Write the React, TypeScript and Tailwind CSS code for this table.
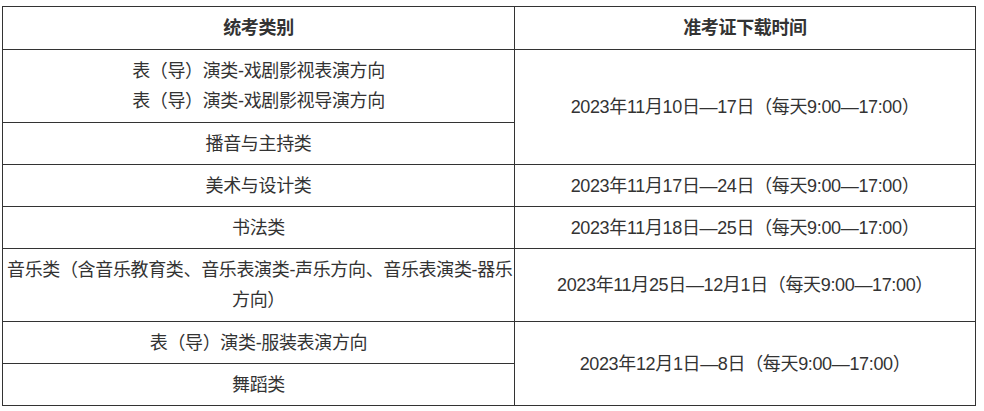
const rows: { cats: string[][]; time: string }[] = [
  {
    cats: [["表（导）演类-戏剧影视表演方向", "表（导）演类-戏剧影视导演方向"], ["播音与主持类"]],
    time: "2023年11月10日—17日（每天9:00—17:00）",
  },
  { cats: [["美术与设计类"]], time: "2023年11月17日—24日（每天9:00—17:00）" },
  { cats: [["书法类"]], time: "2023年11月18日—25日（每天9:00—17:00）" },
  {
    cats: [["音乐类（含音乐教育类、音乐表演类-声乐方向、音乐表演类-器乐", "方向）"]],
    time: "2023年11月25日—12月1日（每天9:00—17:00）",
  },
  { cats: [["表（导）演类-服装表演方向"], ["舞蹈类"]], time: "2023年12月1日—8日（每天9:00—17:00）" },
];

const cell = "border border-[#333] px-[4px] text-center align-middle leading-[30px]";

export default function App() {
  return (
    <div className="w-[984px] h-[411px] bg-white pt-[6px] pl-[2px] font-['Liberation_Sans','Noto_Sans_CJK_SC',sans-serif] text-[18px] tracking-[-0.35px] text-[#333]">
      <table className="w-[974px] border-collapse table-fixed">
        <colgroup>
          <col className="w-[512px]" />
          <col />
        </colgroup>
        <thead>
          <tr>
            <th className={`${cell} py-[6px] font-bold`}>统考类别</th>
            <th className={`${cell} py-[6px] font-bold`}>准考证下载时间</th>
          </tr>
        </thead>
        <tbody>
          {rows.flatMap((r, i) =>
            r.cats.map((lines, j) => (
              <tr key={`${i}-${j}`}>
                <td className={`${cell} whitespace-nowrap ${lines.length > 1 ? "py-[6px]" : "py-[5.5px]"}`}>
                  {lines.map((l, k) => (
                    <div key={k}>{l}</div>
                  ))}
                </td>
                {j === 0 && (
                  <td className={`${cell} py-[5.5px]`} rowSpan={r.cats.length}>
                    {r.time}
                  </td>
                )}
              </tr>
            ))
          )}
        </tbody>
      </table>
    </div>
  );
}
